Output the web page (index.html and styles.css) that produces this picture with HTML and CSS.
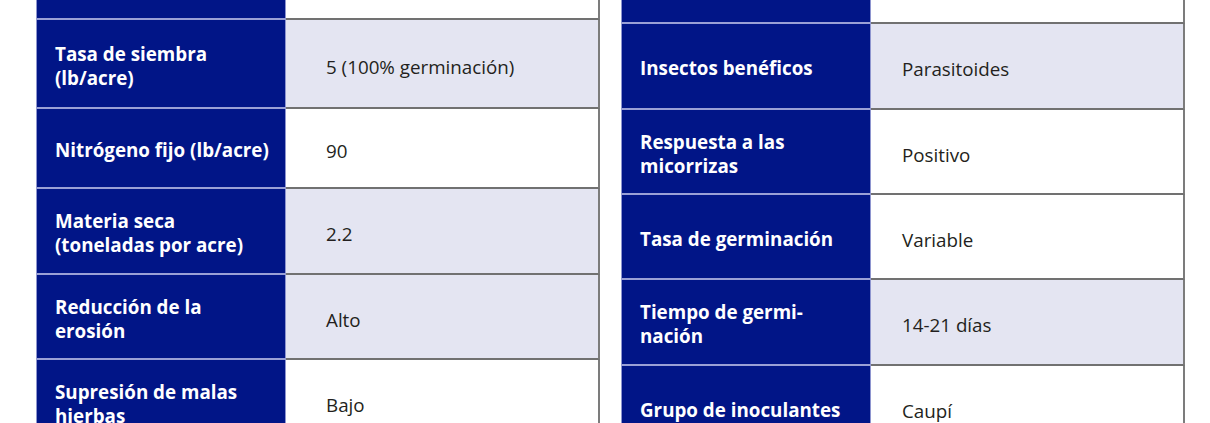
FILE: index.html
```html
<!DOCTYPE html>
<html lang="es">
<head>
<meta charset="utf-8">
<title>Características</title>
<link rel="stylesheet" href="styles.css">
</head>
<body>
<main class="page">
  <section class="table table-left">
    <div class="th"></div><div class="td"></div>
    <div class="th">Tasa de siembra<br>(lb/acre)</div><div class="td alt">5 (100% germinación)</div>
    <div class="th">Nitrógeno fijo (lb/acre)</div><div class="td">90</div>
    <div class="th">Materia seca<br>(toneladas por acre)</div><div class="td alt">2.2</div>
    <div class="th">Reducción de la<br>erosión</div><div class="td alt">Alto</div>
    <div class="th">Supresión de malas<br>hierbas</div><div class="td">Bajo</div>
  </section>
  <section class="table table-right">
    <div class="th"></div><div class="td"></div>
    <div class="th">Insectos benéficos</div><div class="td alt">Parasitoides</div>
    <div class="th">Respuesta a las<br>micorrizas</div><div class="td">Positivo</div>
    <div class="th">Tasa de germinación</div><div class="td">Variable</div>
    <div class="th">Tiempo de germi-<br>nación</div><div class="td alt">14-21 días</div>
    <div class="th">Grupo de inoculantes</div><div class="td">Caupí</div>
  </section>
</main>
</body>
</html>
```

FILE: styles.css
```css
html, body {
  margin: 0;
  padding: 0;
  background: #ffffff;
  overflow: hidden;
}
.page {
  display: flex;
  gap: 21px;
  padding-left: 36px;
  height: 423px;
  font-family: "Open Sans", Lato, "Liberation Sans", sans-serif;
}
.table {
  display: grid;
  grid-template-columns: 250px 314px;
  width: 564px;
}
.table-left {
  grid-template-rows: 20px 89px 80px 86px 85px 85px;
}
.table-right {
  grid-template-rows: 24px 86px 85px 85px 86px 85px;
}
.th {
  box-sizing: border-box;
  background: #011587;
  color: #ffffff;
  font-weight: 700;
  font-size: 18.8px;
  line-height: 24px;
  padding: 4px 6px 0 18px;
  display: flex;
  align-items: center;
  border-left: 1px solid #8e95cf;
  border-right: 1px solid #8e95cf;
  border-bottom: 2px solid #9aa0d6;
  white-space: nowrap;
}
.td {
  box-sizing: border-box;
  background: #ffffff;
  color: #231f20;
  font-size: 18.8px;
  line-height: 24px;
  padding: 6px 10px 0 40px;
  display: flex;
  align-items: center;
  border-right: 2px solid #7c7c7c;
  border-bottom: 2px solid #717171;
}
.table-right .td {
  padding-left: 31px;
}
.td.alt {
  background: #e4e5f2;
}
```
